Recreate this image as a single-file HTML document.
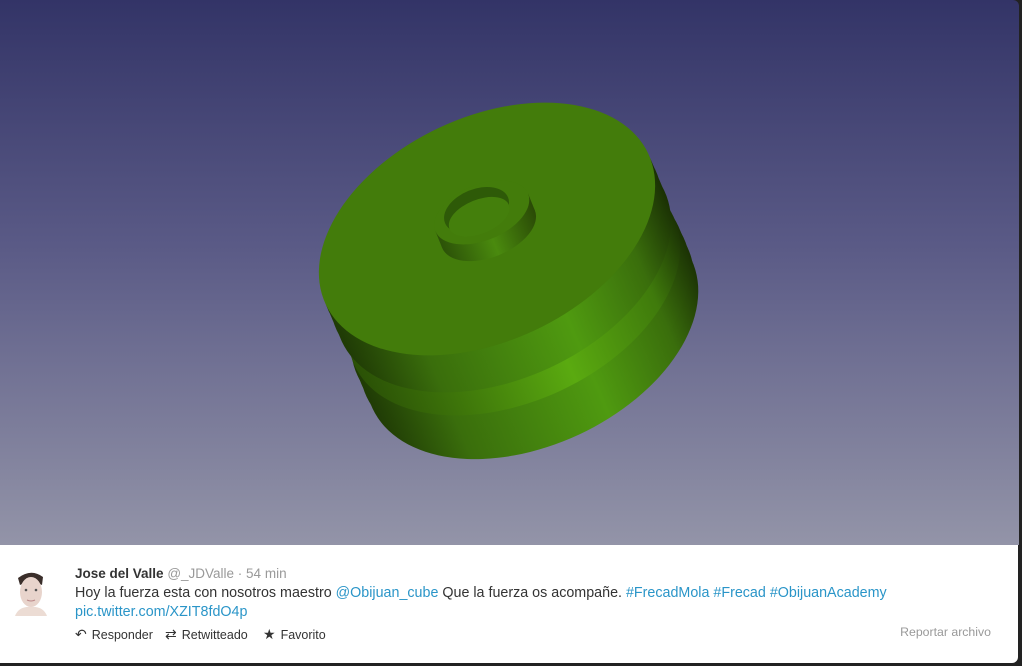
<!DOCTYPE html>
<html><head><meta charset="utf-8"><style>
html,body{margin:0;padding:0;width:1022px;height:666px;overflow:hidden;background:#222;font-family:"Liberation Sans",Arial,sans-serif}
#view{position:absolute;left:0;top:0;width:1019px;height:545px;background:linear-gradient(#333467 0%,#5a5a86 45%,#9394a8 100%);border-top-right-radius:6px}
#card{position:absolute;left:0;top:545px;width:1018px;height:118px;background:#fff;border-bottom-right-radius:6px}
.av{position:absolute;left:15px;top:25px;width:32px;height:46px}
.name{position:absolute;left:75px;top:21px;font-size:13.5px;color:#333}
.name b{font-weight:bold}
.name span{color:#999}
.txt{position:absolute;left:75px;top:39px;font-size:14.3px;line-height:19px;color:#333}
a{color:#2a95c8;text-decoration:none}
.acts{position:absolute;left:75px;top:81px;font-size:12.5px;color:#333}
.acts span{position:absolute;white-space:nowrap}
.acts i{font-style:normal;font-size:14px;margin-right:5px}
.rep{position:absolute;right:27px;top:80px;font-size:12.3px;color:#999}
</style></head><body>
<div id="view">
<svg width="1019" height="545" viewBox="0 0 1019 545">
<defs>
<linearGradient id="side" gradientUnits="userSpaceOnUse" x1="-178" y1="0" x2="178" y2="0">
<stop offset="0" stop-color="#1f3a05"/><stop offset="0.2" stop-color="#3a6e0c"/><stop offset="0.6" stop-color="#4f9a10"/><stop offset="0.85" stop-color="#3a6e0c"/><stop offset="1" stop-color="#1a3004"/>
</linearGradient>
<linearGradient id="groove" gradientUnits="userSpaceOnUse" x1="-178" y1="0" x2="178" y2="0">
<stop offset="0" stop-color="#2a5006"/><stop offset="0.55" stop-color="#5aaa10"/><stop offset="0.85" stop-color="#3f7a0c"/><stop offset="1" stop-color="#1a3004"/>
</linearGradient>
<linearGradient id="hole" x1="0" y1="0" x2="1" y2="0">
<stop offset="0" stop-color="#2c5208"/><stop offset="0.5" stop-color="#4a8a0e"/><stop offset="1" stop-color="#2a4a06"/>
</linearGradient>
</defs>
<g transform="translate(532,334) rotate(-25)"><ellipse rx="176" ry="111" fill="url(#side)"/></g>
<g transform="translate(527,322) rotate(-25)"><ellipse rx="177" ry="111" fill="url(#side)"/></g>
<g transform="translate(523,312) rotate(-25)"><ellipse rx="177" ry="111" fill="url(#side)"/></g>
<g transform="translate(518,301) rotate(-25)"><ellipse rx="177" ry="111" fill="url(#side)"/></g>
<g transform="translate(514,291) rotate(-25)"><ellipse rx="176" ry="110" fill="url(#groove)"/></g>
<g transform="translate(510,282) rotate(-25)"><ellipse rx="172" ry="107" fill="url(#groove)"/></g>
<g transform="translate(506,272) rotate(-25)"><ellipse rx="172" ry="107" fill="url(#groove)"/></g>
<g transform="translate(503,266) rotate(-25)"><ellipse rx="178" ry="112" fill="url(#side)"/></g>
<g transform="translate(498,255) rotate(-25)"><ellipse rx="178" ry="112" fill="url(#side)"/></g>
<g transform="translate(494,245) rotate(-25)"><ellipse rx="178" ry="112" fill="url(#side)"/></g>
<g transform="translate(490,236) rotate(-25)"><ellipse rx="178" ry="112" fill="url(#side)"/></g>
<g transform="translate(487,229) rotate(-25)"><ellipse rx="178" ry="112" fill="#437c0b"/></g>
<g transform="translate(484,218) rotate(-22)">
<ellipse cx="0" cy="12" rx="50" ry="28" fill="url(#hole)"/>
<rect x="-50" y="-6" width="100" height="18" fill="url(#hole)"/>
<ellipse cx="0" cy="-6" rx="50" ry="28" fill="#437c0b"/>
<ellipse cx="-4" cy="-10" rx="34" ry="21" fill="#2e5a08"/>
<ellipse cx="-4" cy="-3" rx="32" ry="17" fill="#447f0c"/>
</g>
</svg>
</div>
<div id="card">
<svg class="av" viewBox="0 0 32 46"><rect width="32" height="46" fill="#fff"/><path d="M3 8 Q16 -2 28 7 L27 15 Q16 9 5 15Z" fill="#3a2e2a"/><ellipse cx="16" cy="22" rx="11" ry="15" fill="#e8d4cc"/><path d="M0 46 Q4 36 16 37 Q28 36 32 46Z" fill="#ecdcd4"/><circle cx="11" cy="20" r="1.3" fill="#555"/><circle cx="21" cy="20" r="1.3" fill="#555"/><path d="M12 30 Q16 32 20 30" stroke="#b88" fill="none"/></svg>
<div class="name"><b>Jose del Valle</b> <span>@_JDValle · 54 min</span></div>
<div class="txt">Hoy la fuerza esta con nosotros maestro <a>@Obijuan_cube</a> Que la fuerza os acompañe. <a>#FrecadMola</a> <a>#Frecad</a> <a>#ObijuanAcademy</a><br><a>pic.twitter.com/XZIT8fdO4p</a></div>
<div class="acts"><span style="left:0"><i>&#x21b6;</i>Responder</span><span style="left:90px"><i>&#x21c4;</i>Retwitteado</span><span style="left:188px"><i>&#x2605;</i>Favorito</span></div>
<div class="rep">Reportar archivo</div>
</div>
</body></html>
